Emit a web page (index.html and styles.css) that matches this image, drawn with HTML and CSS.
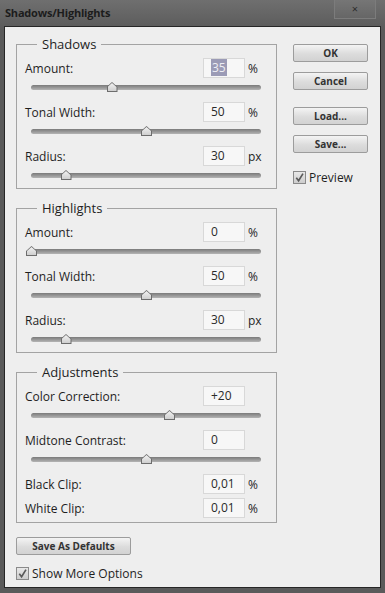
FILE: index.html
```html
<html>
<head>
    <title>Shadows/Highlights</title>
    <link rel="stylesheet" href="styles.css">
</head>
<body>
    <div class="window">
        <div class="titlebar">
            <span class="title">Shadows/Highlights</span>
            <span class="close">&#215;</span>
        </div>
        <div class="dialog">
            <div class="main">
                <fieldset class="group">
                    <legend>Shadows</legend>
                    <div class="field">
                        <span class="label">Amount:</span>
                        <span class="input"><span class="selected">35</span></span>
                        <span class="unit">%</span>
                    </div>
                    <div class="slider"><span class="thumb" style="left: 35%"></span></div>
                    <div class="field">
                        <span class="label">Tonal Width:</span>
                        <span class="input">50</span>
                        <span class="unit">%</span>
                    </div>
                    <div class="slider"><span class="thumb" style="left: 50%"></span></div>
                    <div class="field">
                        <span class="label">Radius:</span>
                        <span class="input">30</span>
                        <span class="unit">px</span>
                    </div>
                    <div class="slider last"><span class="thumb" style="left: 15%"></span></div>
                </fieldset>

                <fieldset class="group">
                    <legend>Highlights</legend>
                    <div class="field">
                        <span class="label">Amount:</span>
                        <span class="input">0</span>
                        <span class="unit">%</span>
                    </div>
                    <div class="slider"><span class="thumb" style="left: 0%"></span></div>
                    <div class="field">
                        <span class="label">Tonal Width:</span>
                        <span class="input">50</span>
                        <span class="unit">%</span>
                    </div>
                    <div class="slider"><span class="thumb" style="left: 50%"></span></div>
                    <div class="field">
                        <span class="label">Radius:</span>
                        <span class="input">30</span>
                        <span class="unit">px</span>
                    </div>
                    <div class="slider last"><span class="thumb" style="left: 15%"></span></div>
                </fieldset>

                <fieldset class="group">
                    <legend>Adjustments</legend>
                    <div class="field">
                        <span class="label">Color Correction:</span>
                        <span class="input">+20</span>
                        <span class="unit"></span>
                    </div>
                    <div class="slider"><span class="thumb" style="left: 60%"></span></div>
                    <div class="field">
                        <span class="label">Midtone Contrast:</span>
                        <span class="input">0</span>
                        <span class="unit"></span>
                    </div>
                    <div class="slider"><span class="thumb" style="left: 50%"></span></div>
                    <div class="field">
                        <span class="label">Black Clip:</span>
                        <span class="input">0,01</span>
                        <span class="unit">%</span>
                    </div>
                    <div class="field clip">
                        <span class="label">White Clip:</span>
                        <span class="input">0,01</span>
                        <span class="unit">%</span>
                    </div>
                </fieldset>

                <button class="btn defaults">Save As Defaults</button>
                <label class="check">
                    <span class="box"><svg width="12" height="12" viewBox="0 0 12 12"><path d="M2.5 6.2 L5 9.5 L9.8 1.8" fill="none" stroke="#5a5a5a" stroke-width="1.8"/></svg></span>
                    Show More Options
                </label>
            </div>

            <div class="side">
                <button class="btn">OK</button>
                <button class="btn">Cancel</button>
                <button class="btn spaced">Load...</button>
                <button class="btn">Save...</button>
                <label class="check preview">
                    <span class="box"><svg width="12" height="12" viewBox="0 0 12 12"><path d="M2.5 6.2 L5 9.5 L9.8 1.8" fill="none" stroke="#5a5a5a" stroke-width="1.8"/></svg></span>
                    Preview
                </label>
            </div>
        </div>
    </div>
</body>
</html>
```

FILE: styles.css
```css
body {
    margin: 0;
    background-color: #5b5b5b;
    font-family: "Open Sans", "Noto Sans", sans-serif;
}
.window {
    width: 385px;
    height: 593px;
    display: flex;
    flex-direction: column;
    background: linear-gradient(#6f6f6f, #5a5a5a 30px, #5a5a5a);
}
.titlebar {
    height: 26px;
    display: flex;
    align-items: flex-start;
    padding-left: 5px;
}
.title {
    margin-top: 5px;
    font-size: 11px;
    font-weight: bold;
    color: #1c1c1c;
    letter-spacing: -0.2px;
}
.close {
    margin-left: auto;
    margin-right: 9px;
    width: 40px;
    height: 18px;
    border: 1px solid #7c7c7c;
    border-top: none;
    background: linear-gradient(#767676, #666666);
    color: #2c2c2c;
    font-size: 11px;
    line-height: 17px;
    text-align: center;
}
.dialog {
    flex: 1;
    margin: 0 4px 5px 4px;
    border: 1px solid #262626;
    background-color: #eeeeee;
    display: flex;
    padding: 0 0 0 11px;
}
.main {
    width: 261px;
    padding-top: 9px;
}
.group {
    margin: 0 0 11px 0;
    padding: 6px 14px 4px 8px;
    border: 1px solid #a3a3a3;
    min-width: 0;
}
.group legend {
    margin-left: 12px;
    padding: 0 5px;
    font-size: 13px;
    line-height: 16px;
    color: #1e1e1e;
}
.field {
    display: flex;
    align-items: center;
    height: 20px;
    font-size: 12px;
    color: #1e1e1e;
}
.field.clip {
    margin-top: 4px;
}
.label {
    flex: 1;
}
.input {
    width: 42px;
    height: 20px;
    box-sizing: border-box;
    border: 1px solid #d8d8d8;
    background-color: #f7f7f7;
    padding-left: 7px;
    line-height: 18px;
    color: #2a2a2a;
}
.selected {
    background-color: #9b9bb6;
    color: #eeeef4;
    padding: 0 1px;
}
.unit {
    width: 14px;
    margin-left: 3px;
}
.slider {
    position: relative;
    height: 18px;
    margin: 0 1px 6px 6px;
}
.slider.last {
    margin-bottom: 0;
}
.slider::before {
    content: "";
    position: absolute;
    left: 0;
    right: 0;
    top: 7px;
    height: 5px;
    border-radius: 3px;
    background: linear-gradient(#7a7a7a, #9c9c9c 60%, #b4b4b4);
}
.thumb {
    position: absolute;
    top: 4px;
    width: 11px;
    height: 10px;
    margin-left: -5px;
    background: #6d6d6d;
    clip-path: polygon(50% 0, 100% 50%, 100% 100%, 0 100%, 0 50%);
}
.thumb::after {
    content: "";
    position: absolute;
    left: 1px;
    top: 1px;
    right: 1px;
    bottom: 1px;
    background: linear-gradient(#f2f2f2, #cfcfcf);
    clip-path: polygon(50% 0, 100% 50%, 100% 100%, 0 100%, 0 50%);
}
.btn {
    display: block;
    height: 18px;
    padding: 0;
    border: 1px solid #9c9c9c;
    border-radius: 2px;
    background: linear-gradient(#f4f4f4, #dcdcdc 55%, #d2d2d2);
    font-family: "Open Sans", "Noto Sans", sans-serif;
    font-size: 10px;
    font-weight: bold;
    color: #333333;
    line-height: 15px;
}
.defaults {
    width: 115px;
    margin-top: 14px;
}
.check {
    display: flex;
    align-items: center;
    font-size: 12px;
    color: #1e1e1e;
    margin-top: 10px;
}
.box {
    width: 11px;
    height: 11px;
    border: 1px solid #8a8a8a;
    background: linear-gradient(#e8e8e8, #cdcdcd);
    margin-right: 3px;
    display: flex;
}
.box svg {
    width: 11px;
    height: 11px;
}
.side {
    width: 75px;
    margin-left: 16px;
    padding-top: 17px;
}
.side .btn {
    width: 75px;
    margin-bottom: 10px;
}
.side .spaced {
    margin-top: 17px;
}
.side .check.preview {
    margin-top: 16px;
}
```
